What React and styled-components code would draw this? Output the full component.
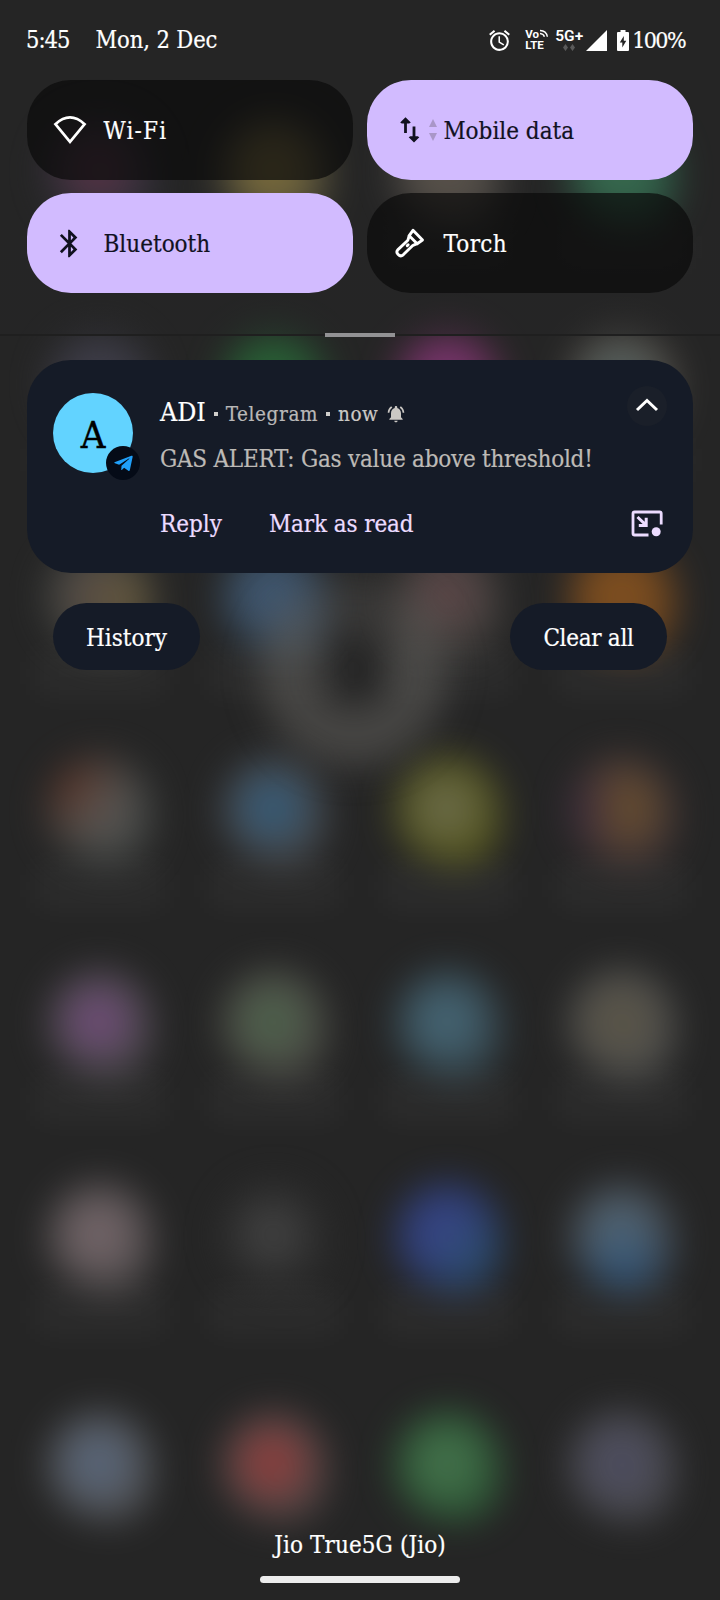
import React from "react";
import styled, { createGlobalStyle } from "styled-components";
import { MdAlarm, MdBluetooth, MdNotificationsActive } from "react-icons/md";
import { FaTelegramPlane } from "react-icons/fa";

const GlobalStyle = createGlobalStyle`
  * { box-sizing: border-box; }
  body {
    margin: 0;
    background: #252525;
    font-family: "Roboto Slab", "DejaVu Serif Condensed", "DejaVu Serif", serif;
    -webkit-font-smoothing: antialiased;
  }
`;

const Screen = styled.div`
  position: relative;
  width: 720px;
  height: 1600px;
  overflow: hidden;
  background: #252525;
  display: flex;
  flex-direction: column;
`;

/* Blurred launcher behind the shade */
const Launcher = styled.div`
  position: absolute;
  inset: 0;
  padding: 62px 13px 0;
  display: grid;
  grid-template-columns: repeat(4, 174px);
  grid-template-rows: repeat(6, 213px) 240px;
`;

const AppCell = styled.div`
  display: flex;
  flex-direction: column;
  align-items: center;
  padding-top: ${(p) => (p.$last ? 71 : 55)}px;
`;

const AppBlob = styled.div`
  width: 106px;
  height: 108px;
  border-radius: 50%;
  background:
    ${(p) => (p.$tint ? `radial-gradient(circle at ${p.$at}, ${p.$tint}, transparent 55%),` : "")}
    radial-gradient(circle at 48% 48%, ${(p) => p.$core} 0 14%, ${(p) => p.$edge} 62%);
  box-shadow: 11px 14px 0 -11px ${(p) => p.$edge};
  filter: blur(18px);
  opacity: 0.94;
`;

const AppLabel = styled.div`
  width: 130px;
  height: 44px;
  background: rgba(255, 255, 255, 0.035);
  filter: blur(16px);
`;

const ClockRing = styled.div`
  position: absolute;
  left: 260px;
  top: 576px;
  width: 188px;
  height: 190px;
  border-radius: 50%;
  border: 58px solid rgba(105, 102, 98, 0.5);
  border-top-color: rgba(105, 102, 98, 0.3);
  filter: blur(18px);
`;

const Shade = styled.div`
  position: relative;
  flex: 1;
  display: flex;
  flex-direction: column;
`;

const QuickPanel = styled.header`
  height: 336px;
  border-bottom: 2px solid #1f1f1f;
  background: linear-gradient(#25252600 60%, #25252680 100%);
`;

const StatusBar = styled.div`
  height: 80px;
  padding: 0 35px 0 26px;
  display: flex;
  align-items: center;
  color: #fff;
`;

const Label = styled.span`
  font-size: ${(p) => p.$size || 24}px;
  line-height: 32px;
  letter-spacing: ${(p) => p.$track || 0}px;
  color: ${(p) => p.$color || "#fff"};
  -webkit-text-stroke: 0.2px currentColor;
  white-space: nowrap;
`;

const DateLabel = styled(Label)`
  margin-left: 26px;
`;

const StatusIcons = styled.div`
  margin-left: auto;
  display: flex;
  align-items: center;
  svg { display: block; }
`;

const VoLte = styled.div`
  width: 23px;
  margin-left: 13px;
  font: 700 11.5px/11.5px Roboto, sans-serif;
`;

const VoRow = styled.div`
  display: flex;
  gap: 1px;
`;

const Network = styled.div`
  width: 28px;
  margin-left: 7px;
  display: flex;
  flex-direction: column;
  align-items: center;
  font: 600 15.5px/15px Roboto, sans-serif;
`;

const SignalIcon = styled.svg`
  margin-left: 3px;
`;

const BatteryIcon = styled.svg`
  margin: 0 3px 0 10px;
`;

const Tiles = styled.div`
  padding: 0 27px;
  display: grid;
  grid-template-columns: 326px 326px;
  grid-auto-rows: 100px;
  gap: 13px 14px;
`;

const Tile = styled.div`
  display: flex;
  align-items: center;
  border-radius: 44px;
  background: ${(p) => (p.$on ? "#d2bbff" : "rgba(10, 10, 10, 0.7)")};
  color: ${(p) => (p.$on ? "#11111f" : "#fff")};
`;

const TileLabel = styled(Label)`
  padding-top: 1px;
`;

const TileIcon = styled.div`
  width: 76.5px;
  padding-left: ${(p) => p.$inset}px;
  svg { display: block; }
`;

const Handle = styled.div`
  width: 70px;
  height: 4px;
  margin: 40px auto 0;
  background: #929294;
`;

const Card = styled.article`
  height: 213px;
  margin: 24px 27px 0;
  padding: 33px 26px 0;
  border-radius: 44px;
  background: #151b27;
  display: flex;
`;

const Avatar = styled.div`
  position: relative;
  width: 80px;
  height: 80px;
  border-radius: 50%;
  background: #62d3ff;
  color: #000;
  text-align: center;
  font-size: 38px;
  line-height: 85px;
  -webkit-text-stroke: 0.4px #000;
`;

const AppBadge = styled.div`
  position: absolute;
  left: 53px;
  top: 53px;
  width: 34px;
  height: 34px;
  border-radius: 50%;
  background: #050b17;
  display: flex;
  align-items: center;
  justify-content: center;
  color: #20a0fa;
`;

const Message = styled.div`
  flex: 1;
  margin-left: 27px;
  padding-top: 3px;
  display: flex;
  flex-direction: column;
`;

const TitleRow = styled.div`
  height: 32px;
  margin-bottom: 15px;
  display: flex;
  align-items: baseline;
`;

const Dot = styled.span`
  width: 4px;
  height: 4px;
  margin: 3px 8px 0 8px;
  background: #d0cecb;
  align-self: center;
`;

const BellWrap = styled.span`
  margin-left: 8px;
  margin-top: 3px;
  align-self: center;
  color: #cbc8c4;
  svg { display: block; }
`;

const Actions = styled.div`
  margin-top: 33px;
  display: flex;
  gap: 47px;
`;

const Side = styled.div`
  display: flex;
  flex-direction: column;
  align-items: center;
  svg { display: block; }
`;

const Collapse = styled.div`
  width: 40px;
  height: 40px;
  margin: -7px 0 84px;
  border-radius: 50%;
  background: #1a1f29;
  display: flex;
  align-items: center;
  justify-content: center;
`;

const FooterRow = styled.div`
  margin-top: 30px;
  padding: 0 53px;
  display: flex;
  justify-content: space-between;
`;

const PillButton = styled.button`
  width: ${(p) => p.$width}px;
  height: 67px;
  padding: 2px 0 0;
  border: 0;
  border-radius: 34px;
  background: #151b27;
  font-family: inherit;
`;

const Carrier = styled.footer`
  margin-top: auto;
  padding-bottom: 17px;
  display: flex;
  flex-direction: column;
  align-items: center;
  gap: 15px;
`;

const NavPill = styled.div`
  width: 200px;
  height: 7px;
  border-radius: 4px;
  background: #ededed;
`;

const apps = [
  ["#5c3346", "#33323e"], ["#85733b", "#5a553e"], ["#5d554c", "#504c48"], ["#3b7052", "#2f5f49"],
  ["#42404e", "#383840"], ["#296b38", "#285032"], ["#84387a", "#642f55"], ["#536464", "#59534c"],
  ["#5e4f48", "#444744", "#6a5c3c", "80% 55%"], ["#435c78", "#37495a"], ["#60484a", "#45423f"], ["#855220", "#75491f"],
  ["#626260", "#434543", "#5c3427", "16% 22%"], ["#376080", "#47494c"], ["#70704f", "#58591d"], ["#75572d", "#4a3a38", "#3c2a40", "2% 50%"],
  ["#76507f", "#4c494d"], ["#51674f", "#4d4c47"], ["#496c7c", "#384b54"], ["#5e5849", "#525250"],
  ["#7b6b6f", "#565152"], ["#454545", "#2b2b2b"], ["#3b4990", "#2c3b70", "#2b5570", "90% 85%"], ["#566e80", "#454a50", "#2d5680", "55% 95%"],
  ["#5d6c82", "#535457"], ["#97403f", "#554847"], ["#487850", "#2f5d38"], ["#505065", "#4c4c51"],
];

const WifiIcon = () => (
  <svg width="34" height="30" viewBox="0 0 34 30" fill="none" stroke="currentColor" strokeWidth="2.7">
    <path d="M2.4 9.2Q17-4.4 31.6 9.2L17 26.8Z" strokeLinejoin="miter" />
  </svg>
);

const MobileDataIcon = () => (
  <svg width="40" height="28" viewBox="0 0 40 28" fill="none" stroke="currentColor" strokeWidth="2.8">
    <path d="M5.5 17V5M14 10.5V23" />
    <path d="M5.5 1.2 10.8 6.5 9.2 7.6H1.8L.2 6.5ZM14 26.6 19.3 21.3 17.7 20.2H10.3L8.7 21.3Z" fill="currentColor" stroke="none" />
    <path d="M29 11 33 3 37 11ZM29 17H37L33 25Z" fill="#a996c7" stroke="none" />
  </svg>
);

const TorchIcon = () => (
  <svg width="30" height="30" viewBox="0 0 30 30" fill="none" stroke="currentColor" strokeWidth="2.9" strokeLinejoin="round">
    <path d="M18 2.3 27.5 12 22.2 15.7 14.2 7.7Z" />
    <path d="M14.2 7.7 12.9 12.2 3 21.6C-.1 24.8 4.8 29.8 8.2 26.8L18 17.3 22.2 15.7" />
    <path d="M12.2 17.8 13.2 16.8" strokeLinecap="round" />
  </svg>
);

const OpenWindowIcon = () => (
  <svg width="32" height="28" viewBox="0 0 32 28" fill="none" stroke="#ecdcff" strokeWidth="2.8">
    <path d="M17.5 25H3.6Q2 25 2 23.4V3.6Q2 2 3.6 2H28.6Q30.2 2 30.2 3.6V14.5" />
    <path d="M6.5 7 15 15.2M15.2 7.8V15.4H7.8" strokeWidth="3" />
    <circle cx="25.2" cy="21.7" r="4.5" fill="#ecdcff" stroke="none" />
  </svg>
);

export default function App() {
  return (
    <>
      <GlobalStyle />
      <Screen>
        <Launcher>
          {apps.map(([core, edge, tint, at], i) => (
            <AppCell key={i} $last={i > 23}>
              <AppBlob $core={core} $edge={edge} $tint={tint} $at={at} />
              {i < 24 && <AppLabel />}
            </AppCell>
          ))}
        </Launcher>
        <ClockRing />
        <Shade>
          <QuickPanel>
            <StatusBar>
              <Label $size={23.5} $track={-1}>5:45</Label>
              <DateLabel $size={23.5} $track={-0.1}>Mon, 2 Dec</DateLabel>
              <StatusIcons>
                <MdAlarm size={25} />
                <VoLte>
                  <VoRow>
                    Vo
                    <svg width="9" height="10" viewBox="0 0 9 10" fill="none" stroke="currentColor" strokeWidth="1.5">
                      <path d="M0 1.2Q7 1.4 8 8M0 4.4Q4 4.8 4.8 8" />
                    </svg>
                  </VoRow>
                  LTE
                </VoLte>
                <Network>
                  5G+
                  <svg width="16" height="7" viewBox="0 0 16 7" fill="#5a5a5a">
                    <path d="M4.5 0 7 3.5 4.5 7 2 3.5ZM11.5 0 14 3.5 11.5 7 9 3.5Z" />
                  </svg>
                </Network>
                <SignalIcon width="21" height="21" viewBox="0 0 21 21">
                  <path d="M0 21 21 0V21Z" fill="currentColor" />
                </SignalIcon>
                <BatteryIcon width="12" height="21" viewBox="0 0 12 21">
                  <path d="M3.5 0H8.5V2H11Q12 2 12 3V20Q12 21 11 21H1Q0 21 0 20V3Q0 2 1 2H3.5Z" fill="currentColor" />
                  <path d="M6.8 6 2.8 12.5H5.3V17.5L9.3 10.8H6.8Z" fill="#252525" />
                </BatteryIcon>
                <Label $size={23} $track={-1.6}>100%</Label>
              </StatusIcons>
            </StatusBar>
            <Tiles>
              <Tile>
                <TileIcon $inset={26}><WifiIcon /></TileIcon>
                <TileLabel $track={1.2}>Wi-Fi</TileLabel>
              </Tile>
              <Tile $on>
                <TileIcon $inset={33}><MobileDataIcon /></TileIcon>
                <TileLabel $color="#11111f">Mobile data</TileLabel>
              </Tile>
              <Tile $on>
                <TileIcon $inset={26}><MdBluetooth size={33} /></TileIcon>
                <TileLabel $color="#11111f">Bluetooth</TileLabel>
              </Tile>
              <Tile>
                <TileIcon $inset={28}><TorchIcon /></TileIcon>
                <TileLabel $track={0.3}>Torch</TileLabel>
              </Tile>
            </Tiles>
            <Handle />
          </QuickPanel>
          <Card>
            <Avatar>
              A
              <AppBadge><FaTelegramPlane size={21} /></AppBadge>
            </Avatar>
            <Message>
              <TitleRow>
                <Label $size={26.5}>ADI</Label>
                <Dot />
                <Label $size={20.5} $track={0.6} $color="#b9b8b8">Telegram</Label>
                <Dot />
                <Label $size={20.5} $track={0.5} $color="#cbc8c4">now</Label>
                <BellWrap><MdNotificationsActive size={20} /></BellWrap>
              </TitleRow>
              <Label $track={-0.25} $color="#bdbab6">GAS ALERT: Gas value above threshold!</Label>
              <Actions>
                <Label $color="#ecdcff">Reply</Label>
                <Label $track={-0.1} $color="#ecdcff">Mark as read</Label>
              </Actions>
            </Message>
            <Side>
              <Collapse>
                <svg width="24" height="16" viewBox="0 0 24 16" fill="none" stroke="#fff" strokeWidth="3">
                  <path d="M2 12 12 2.5 22 12" />
                </svg>
              </Collapse>
              <OpenWindowIcon />
            </Side>
          </Card>
          <FooterRow>
            <PillButton $width={147}><Label>History</Label></PillButton>
            <PillButton $width={157}><Label $track={-0.3}>Clear all</Label></PillButton>
          </FooterRow>
          <Carrier>
            <Label $track={0.1}>Jio True5G (Jio)</Label>
            <NavPill />
          </Carrier>
        </Shade>
      </Screen>
    </>
  );
}
